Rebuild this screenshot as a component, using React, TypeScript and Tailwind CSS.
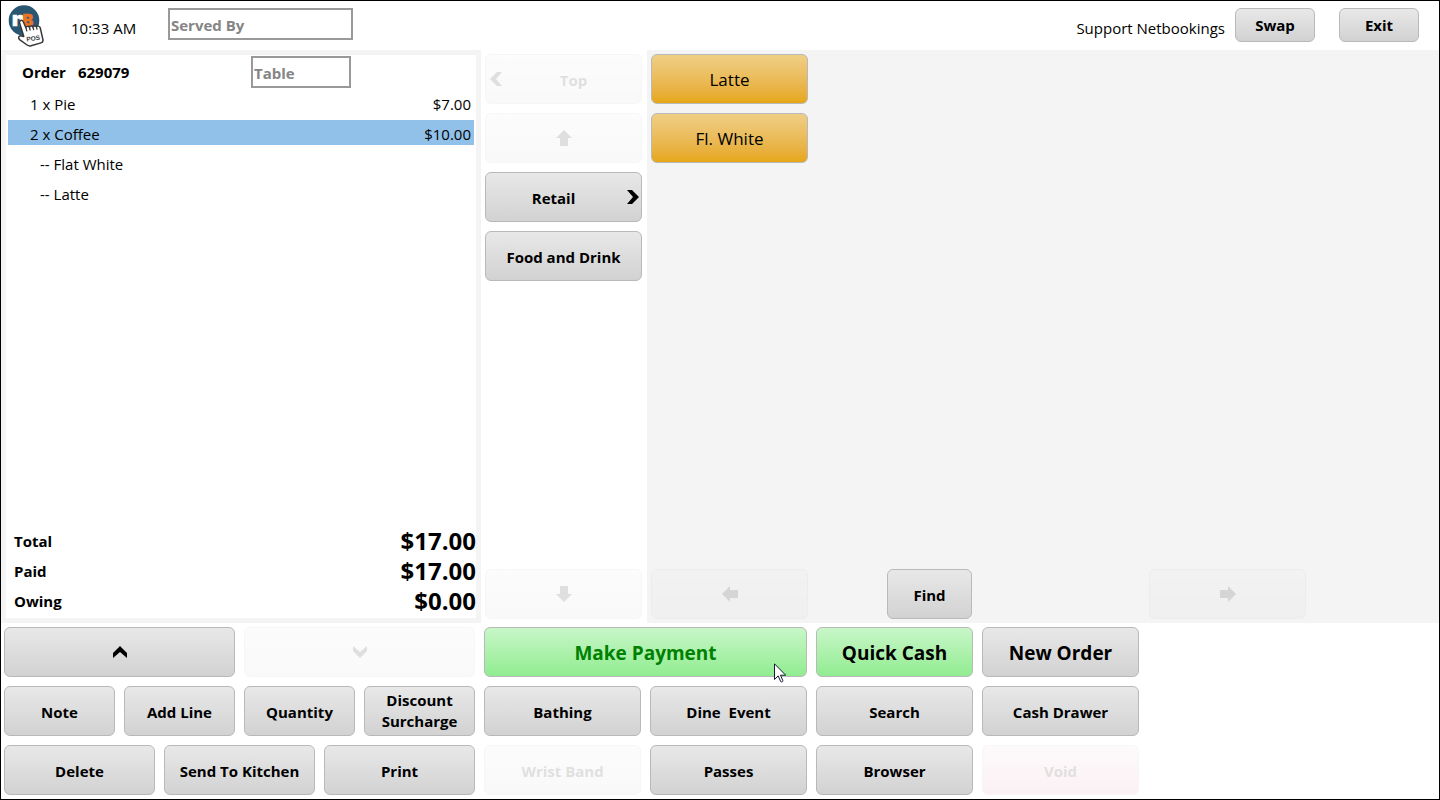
import type { ButtonHTMLAttributes, ReactNode } from "react";
import { clsx } from "clsx";

type Tone = "gray" | "green" | "amber" | "pink";

const tones: Record<Tone, string> = {
  gray: "from-[#e8e8e8] to-[#d2d2d2]",
  green: "from-[#c8f6c8] to-[#90ec90]",
  amber: "from-[#efcf85] to-[#e6a711]",
  pink: "from-[#f3dce2] to-[#e08fa6]",
};

interface PadButtonProps extends ButtonHTMLAttributes<HTMLButtonElement> {
  tone?: Tone;
  children: ReactNode;
}

function PadButton({ tone = "gray", className, children, ...rest }: PadButtonProps) {
  return (
    <button
      type="button"
      className={clsx(
        "flex items-center justify-center rounded-md border border-[#b9b9b9] bg-linear-to-b leading-[21px] disabled:opacity-[0.12]",
        tones[tone],
        className,
      )}
      {...rest}
    >
      {children}
    </button>
  );
}

function Chevron({ dir }: { dir: "left" | "right" | "up" | "down" }) {
  const horizontal = dir === "left" || dir === "right";
  const points = {
    right: "0,0 5,0 12,7 5,14 0,14 6,7",
    left: "12,0 7,0 0,7 7,14 12,14 6,7",
    up: "0,12 0,7 7,0 14,7 14,12 7,6",
    down: "0,0 0,5 7,12 14,5 14,0 7,6",
  }[dir];
  return (
    <svg
      width={horizontal ? 12 : 14}
      height={horizontal ? 14 : 12}
      viewBox={horizontal ? "0 0 12 14" : "0 0 14 12"}
      aria-hidden="true"
    >
      <polygon points={points} />
    </svg>
  );
}

function Arrow({ dir }: { dir: "left" | "right" | "up" | "down" }) {
  const points = {
    up: "8,0 16,8 12,8 12,16 4,16 4,8 0,8",
    down: "8,16 16,8 12,8 12,0 4,0 4,8 0,8",
    left: "0,8 8,0 8,4 16,4 16,12 8,12 8,16",
    right: "16,8 8,0 8,4 0,4 0,12 8,12 8,16",
  }[dir];
  return (
    <svg width="16" height="16" viewBox="0 0 16 16" aria-hidden="true">
      <polygon points={points} />
    </svg>
  );
}

function Logo() {
  return (
    <svg width="36" height="42" viewBox="0 0 36 42" role="img" aria-label="NetBookings POS">
      <circle cx="16" cy="15.5" r="15.3" fill="#2a5672" />
      <text
        x="4"
        y="21"
        fontFamily="Inter, sans-serif"
        fontWeight="900"
        fontSize="20"
        fill="#fff"
        stroke="#fff"
        strokeWidth="0.6"
      >
        n
      </text>
      <text
        x="14.5"
        y="21"
        fontFamily="Inter, sans-serif"
        fontWeight="900"
        fontSize="16"
        fill="#ea7423"
        stroke="#ea7423"
        strokeWidth="0.5"
      >
        B
      </text>
      <path
        d="M12.300 15.700c1.200-.8 2.500-.2 3 1l2.600 6c.2-1.500 2.900-1.900 3.500-.4.200-1.400 2.900-1.700 3.500-.3.300-1.300 2.900-1.500 3.500-.2.500-1.100 3.300-1 3.800.9l2.700 11.800c.4 1.800-.3 2.900-1.900 3.400l-9.900 2.900c-1.500.4-2.700.2-4-.8l-7.200-5.200c-2.100-1.600-1.300-4.400 1.300-3.900l2.600.5-4.200-13.300c-.3-.9-.1-1.800.7-2.400z"
        fill="#fff"
        stroke="#383838"
        strokeWidth="1.500"
        strokeLinejoin="round"
      />
      <path
        d="M17.900 22.700l1 3.600M21.400 22.300l.9 3.200M24.900 22l.8 3M28.400 21.800l.7 2.800"
        stroke="#383838"
        strokeWidth="1.300"
        fill="none"
      />
      <text
        x="18.700"
        y="36.500"
        transform="rotate(-8 18.700 36.500)"
        fontFamily="Liberation Sans, sans-serif"
        fontWeight="700"
        fontSize="6.500"
        fill="#383838"
      >
        POS
      </text>
    </svg>
  );
}

function Pointer() {
  return (
    <svg
      className="pointer-events-none absolute top-[35px] right-5"
      width="12"
      height="20"
      viewBox="0 0 12 20"
      aria-hidden="true"
    >
      <path
        d="M.5.8v15.700l3.700-3.600 2.500 5.700c.9.800 2.300.2 2.200-.9l-2.400-5.500h5.200z"
        fill="#fff"
        stroke="#111a33"
        strokeWidth="1"
      />
    </svg>
  );
}

const lines = [
  { label: "1 x Pie", price: "$7.00" },
  { label: "2 x Coffee", price: "$10.00", selected: true },
  { label: "-- Flat White", option: true },
  { label: "-- Latte", option: true },
];

const totals = [
  { label: "Total", value: "$17.00" },
  { label: "Paid", value: "$17.00" },
  { label: "Owing", value: "$0.00" },
];

const fieldClass =
  "h-8 rounded-none border-2 border-[#999] bg-white px-px pt-0.5 font-bold outline-none placeholder:text-[#858585] placeholder:opacity-100";

function Header() {
  return (
    <header className="flex h-[49px] shrink-0 items-start pr-5 pl-[7px]">
      <div className="pt-1">
        <Logo />
      </div>
      <time className="box-content w-[97px] pt-4 pl-[27px] leading-[22px] whitespace-nowrap">10:33 AM</time>
      <div className="flex flex-1 pt-[7px]">
        <input aria-label="Served By" placeholder="Served By" className={clsx(fieldClass, "w-[185px]")} />
      </div>
      <span className="pt-4 pr-2.5 leading-[22px]">Support Netbookings</span>
      <div className="flex gap-6 pt-[7px] font-bold">
        <PadButton className="h-[34px] w-20">Swap</PadButton>
        <PadButton className="h-[34px] w-20">Exit</PadButton>
      </div>
    </header>
  );
}

function OrderPanel() {
  return (
    <section aria-label="Order" className="flex w-[480px] shrink-0 flex-col p-[5px]">
      <div className="flex flex-1 flex-col bg-white pt-px">
        <div className="flex items-center">
          <h1 className="flex w-[245px] gap-3 pl-4 font-bold">
            <span>Order</span>
            <span>629079</span>
          </h1>
          <input aria-label="Table" placeholder="Table" className={clsx(fieldClass, "w-[100px]")} />
        </div>
        <div className="flex-1 px-0.5">
          <table className="-mt-[3px] w-full border-separate border-spacing-x-0 border-spacing-y-[5px]">
            <tbody>
              {lines.map((line) => (
                <tr key={line.label} className={clsx("h-[25px]", line.selected && "bg-[#91c1e9]")}>
                  <td className={clsx("p-0 pt-[3px] leading-[22px]", line.option ? "pl-8" : "pl-[22px]")}>
                    {line.label}
                  </td>
                  <td className="p-0 pt-[3px] pr-[3px] text-right leading-[22px]">{line.price}</td>
                </tr>
              ))}
            </tbody>
          </table>
        </div>
        <dl className="pb-0.5 pl-2 font-bold">
          {totals.map((t) => (
            <div key={t.label} className="flex h-[30px] items-center justify-between">
              <dt>{t.label}</dt>
              <dd className="text-2xl leading-[30px]">{t.value}</dd>
            </div>
          ))}
        </dl>
      </div>
    </section>
  );
}

function Categories() {
  return (
    <nav
      aria-label="Categories"
      className="flex w-[166px] shrink-0 flex-col gap-[9px] bg-white pt-1 pr-[5px] pb-1 pl-1 font-bold"
    >
      <PadButton disabled className="h-[50px] pl-1">
        <Chevron dir="left" />
        <span className="flex-1 pt-0.5 pl-1">Top</span>
      </PadButton>
      <PadButton disabled aria-label="Scroll up" className="h-[50px]">
        <Arrow dir="up" />
      </PadButton>
      <PadButton className="h-[50px] pr-0.5">
        <span className="flex-1 pt-0.5 pr-1.5">Retail</span>
        <Chevron dir="right" />
      </PadButton>
      <PadButton className="h-[50px] pt-0.5">Food and Drink</PadButton>
      <PadButton disabled aria-label="Scroll down" className="mt-auto h-[50px]">
        <Arrow dir="down" />
      </PadButton>
    </nav>
  );
}

function Products() {
  return (
    <section aria-label="Products" className="flex flex-1 flex-col p-1">
      <div className="flex flex-1 flex-col gap-[9px] text-[17px]">
        <PadButton tone="amber" className="h-[50px] w-[157px]">
          Latte
        </PadButton>
        <PadButton tone="amber" className="h-[50px] w-[157px]">
          Fl. White
        </PadButton>
      </div>
      <div className="flex font-bold">
        <PadButton disabled aria-label="Previous page" className="h-[50px] w-[157px]">
          <Arrow dir="left" />
        </PadButton>
        <div className="flex w-[341px] pl-[79px]">
          <PadButton className="h-[50px] w-[85px] pt-0.5">Find</PadButton>
        </div>
        <PadButton disabled aria-label="Next page" className="h-[50px] w-[157px]">
          <Arrow dir="right" />
        </PadButton>
      </div>
    </section>
  );
}

function Actions() {
  return (
    <footer className="flex shrink-0 gap-[9px] bg-white px-[3px] py-1 font-bold">
      <div className="grid w-[471px] grid-cols-12 grid-rows-[50px_50px_50px] gap-[9px]">
        <PadButton aria-label="Previous line" className="col-span-6">
          <Chevron dir="up" />
        </PadButton>
        <PadButton disabled aria-label="Next line" className="col-span-6">
          <Chevron dir="down" />
        </PadButton>
        <PadButton className="col-span-3 pt-0.5">Note</PadButton>
        <PadButton className="col-span-3 pt-0.5">Add Line</PadButton>
        <PadButton className="col-span-3 pt-0.5">Quantity</PadButton>
        <PadButton className="col-span-3">
          Discount
          <br />
          Surcharge
        </PadButton>
        <PadButton className="col-span-4 pt-0.5">Delete</PadButton>
        <PadButton className="col-span-4 pt-0.5">Send To Kitchen</PadButton>
        <PadButton className="col-span-4 pt-0.5">Print</PadButton>
      </div>
      <div className="grid w-[655px] grid-cols-4 grid-rows-[50px_50px_50px] gap-[9px]">
        <PadButton tone="green" className="relative col-span-2 pt-0.5 text-[19px] text-[#008000]">
          Make Payment
          <Pointer />
        </PadButton>
        <PadButton tone="green" className="pt-0.5 text-[19px]">
          Quick Cash
        </PadButton>
        <PadButton className="pt-0.5 text-[19px]">New Order</PadButton>
        <PadButton className="pt-0.5">Bathing</PadButton>
        <PadButton className="pt-0.5 whitespace-pre">{"Dine  Event"}</PadButton>
        <PadButton className="pt-0.5">Search</PadButton>
        <PadButton className="pt-0.5">Cash Drawer</PadButton>
        <PadButton disabled className="pt-0.5">
          Wrist Band
        </PadButton>
        <PadButton className="pt-0.5">Passes</PadButton>
        <PadButton className="pt-0.5">Browser</PadButton>
        <PadButton tone="pink" disabled className="pt-0.5">
          Void
        </PadButton>
      </div>
    </footer>
  );
}

export default function App() {
  return (
    <div className="flex min-h-screen flex-col border border-black bg-white font-['Open_Sans','Noto_Sans',sans-serif] text-[15px] text-black">
      <Header />
      <main className="flex flex-1 bg-[#f4f4f4]">
        <OrderPanel />
        <Categories />
        <Products />
      </main>
      <Actions />
    </div>
  );
}
